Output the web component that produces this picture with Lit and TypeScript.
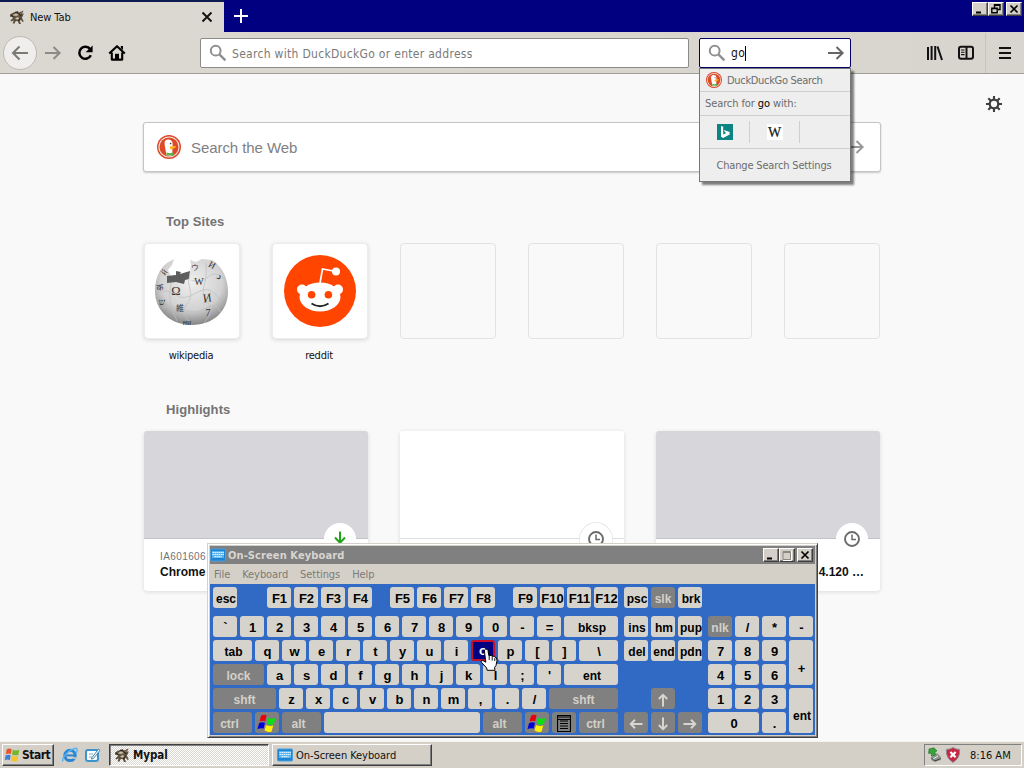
import { LitElement, html, css, svg } from "lit";
import { customElement, property } from "lit/decorators.js";

type Key = [label: string, width?: number, cls?: string];

const duck = (size: number) => html`<svg width=${size} height=${size} viewBox="0 0 24 24">
  <circle cx="12" cy="12" r="12" fill="#d9482b" />
  <circle cx="12" cy="12" r="10.6" fill="#f6e3dc" />
  <circle cx="12" cy="12" r="9.5" fill="#de4a28" />
  <path d="M9.5 20.6L7.6 9.4C7.2 6 9 4.4 11.6 4.6C14.6 4.8 15.9 7 15.6 10L15.2 20.6Q12.4 22 9.5 20.6Z" fill="#fff" />
  <path d="M13.2 11.6C15 10.6 18 10.8 19.4 11.6C18.6 13 16 13.6 14 14.4C12.6 14 12.4 12.4 13.2 11.6Z" fill="#fdb515" />
  <path d="M9.4 17.6L13 18.2L16.6 17.2V21L13 20.4L9.8 21Z" fill="#5cb04a" />
  <circle cx="13.6" cy="8.6" r=".8" fill="#334" />
</svg>`;

const magnifier = html`<svg width="18" height="18" viewBox="0 0 18 18" fill="none" stroke="#8f8f8f" stroke-width="2">
  <circle cx="6.7" cy="6.7" r="4.9" /><path d="M10.4 10.4L16.4 16.4" stroke-width="2.4" />
</svg>`;

const arrow = (color: string, left = false) => html`<svg width="18" height="16" viewBox="0 0 18 16" fill="none" stroke=${color} stroke-width="2">
  <path d=${left ? "M17 8H2M8.5 1.5L2 8L8.5 14.5" : "M1 8H16M9.5 2L15.6 8L9.5 14"} />
</svg>`;

const goat = html`<svg width="16" height="16" viewBox="0 0 16 16">
  <path d="M1 5.5L3.5 4L6 3L9 2.4L10 3.6L14.6 1.6L13 4.4L14.8 4.6L13.6 7.4L12.8 8.6L14.8 12.6L13.6 13L11.6 10.6L11 12.6L12 15H10L8.6 12L6.6 12.2L5.6 14.6H3.6L4.6 11.4L2 12.4L1.4 11.4L4 9L3 7.6L1.2 8Z" fill="#5d5140" />
  <path d="M4 6.2L7 4.6L9.4 6L7 6.8ZM6.4 9.6L8.6 8.2L10.4 9.6L8 10.4ZM11 5L13 3.6" fill="#cfc3aa" stroke="#cfc3aa" stroke-width=".4" />
  <path d="M2 6.6L4.4 7.6M9.6 4.6L12.4 6.8M9.4 12L11.4 9M6 3.4L9 3" stroke="#1e1812" stroke-width="1" />
</svg>`;

const keyboardIcon = html`<svg width="16" height="14" viewBox="0 0 16 14">
  <rect x=".5" y="1" width="15" height="12" rx="1" fill="#1d84d4" stroke="#4f9fd8" />
  <rect x="2" y="3" width="12" height="7" fill="#57b4f0" />
  <path d="M2.5 4.5H14M2.5 6.5H14M4.5 8.7H11.5" stroke="#e8f7ff" stroke-width="1.2" stroke-dasharray="1.4 .6" />
</svg>`;

const flag = html`<svg width="20" height="19" viewBox="0 0 20 19">
  <path d="M4 1.8Q7 0 9.6 1.4L8.2 7.2Q5.4 6 2.6 7.6Z" fill="#e8000b" />
  <path d="M11 4Q14 5.5 18.4 4L16.8 10.2Q13 11.4 9.6 9.4Z" fill="#08e010" />
  <path d="M2 9.2Q5 7.6 8 8.8L6.6 14.6Q3.6 13.6 .4 15.2Z" fill="#0000d8" />
  <path d="M9 11Q12.4 12.6 16.2 11.6L14.6 17.4Q11 18.8 7.6 16.6Z" fill="#fff200" />
</svg>`;

const minGlyph = svg`<path d="M3 8.5H8V10.5H3Z" fill="#000" />`;
const closeGlyph = svg`<path d="M3.5 2.5L10.5 9.5M10.5 2.5L3.5 9.5" stroke="#000" stroke-width="1.7" />`;

@customElement("caption-button")
class CaptionButton extends LitElement {
  @property() kind = "close";
  static styles = css`
    :host { display: block; width: 16px; height: 14px; box-sizing: border-box; background: #d4d0c8;
      border: 1px solid; border-color: #fff #404040 #404040 #fff; box-shadow: inset -1px -1px #808080; }
    svg { display: block; }
  `;
  render() {
    const glyphs: Record<string, unknown> = {
      min: minGlyph,
      close: closeGlyph,
      restore: svg`<path d="M5.5 4.5V1.8H11V6.5H9M5 2.2H11.5M2.8 9.8V5.2H8.2V9.8ZM2.3 5.6H8.7" fill="none" stroke="#000" stroke-width="1.4" />`,
      max: svg`<path d="M3 2.5H10.5V10.5H3ZM3 3.5H10.5" fill="none" stroke="#8b8882" /><path d="M11.5 2V11.5H3" fill="none" stroke="#fff" />`,
    };
    return html`<svg width="14" height="12" viewBox="0 0 14 12">${glyphs[this.kind]}</svg>`;
  }
}

@customElement("screen-keyboard")
class ScreenKeyboard extends LitElement {
  static styles = css`
    :host { display: block; box-sizing: border-box; background: #d4d0c8; border: 1px solid; border-color: #d4d0c8 #404040 #404040 #d4d0c8;
      box-shadow: inset 1px 1px #fff, inset -1px -1px #808080; padding: 2px; }
    .title { display: flex; align-items: center; height: 18px; background: #808080; color: #d8d5cf; padding: 0 2px 0 0;
      font: bold 11px "DejaVu Sans Condensed", "DejaVu Sans", sans-serif; font-stretch: condensed; letter-spacing: .1px; }
    .title span { flex: 1; padding-left: 2px; }
    .title caption-button:last-child { margin-left: 2px; }
    .menu { display: flex; gap: 12px; height: 20px; align-items: center; padding: 0 4px; color: #7d7a75;
      font: 11px "DejaVu Sans Condensed", "DejaVu Sans", sans-serif; font-stretch: condensed; letter-spacing: -.07px; }
    .board { display: flex; background: #316ac5; height: 151px; box-sizing: border-box; padding: 3px 3px 0;
      font: bold 13px "Liberation Sans", Arial, sans-serif; }
    .main { width: 405px; flex: none; }
    .row { display: flex; gap: 3px; height: 21px; margin-bottom: 3px; }
    .row.f { margin-bottom: 8px; }
    .key { box-sizing: border-box; height: 21px; border-radius: 3px; background: #d6d3cc; color: #000; display: flex;
      align-items: center; justify-content: center; padding: 2px 0 0 1px; white-space: nowrap; overflow: hidden; flex: none; }
    .word { font-size: 12px; padding-left: 2px; }
    .g { background: #808080; color: #d4d0c8; padding-left: 0; }
    .mod { padding-right: 6px; }
    .hot { background: #000080; color: #fff; border: 2px solid #c8102e; padding: 0; }
    .nav { margin-left: 6px; display: grid; grid-template-columns: repeat(3, 24px); grid-template-rows: 26px repeat(5, 21px); gap: 3px; }
    .pad { margin-left: 6px; display: grid; grid-template-columns: repeat(4, 24px); grid-template-rows: 26px repeat(5, 21px); gap: 3px; }
    .tall { grid-row: span 2; height: 45px; padding-top: 11px; }
    .wide { grid-column: span 2; }
    .blank { visibility: hidden; }
    .span4 { grid-column: 1 / -1; }
    svg { display: block; flex: none; }
  `;
  key([label, w = 24, cls = ""]: Key) {
    const glyphs: Record<string, unknown> = {
      WIN: flag,
      MENU: html`<svg width="14" height="18" viewBox="0 0 14 18" fill="none" stroke="#000"><path d="M.5 .5H13.5V16.5H.5ZM.5 2H13.5M3 6H11M3 8.5H11M3 11H11M3 13.5H11" stroke-width="1.2" /><path d="M.5 4.5H13.5" /></svg>`,
      UP: this.pointer(0),
      RIGHT: this.pointer(90),
      DOWN: this.pointer(180),
      LEFT: this.pointer(270),
    };
    const word = /^[a-z]{2,}$/.test(label) && !cls.includes("g") ? "word" : "";
    const size = cls.includes("g") ? "font-size:12px;" : "";
    return html`<div class="key ${cls} ${word}" style="${size}width:${w}px">${glyphs[label] ?? label}</div>`;
  }
  pointer(angle: number) {
    return html`<svg width="14" height="14" viewBox="0 0 14 14" fill="none" stroke="#d8d5cf" stroke-width="2"><path d="M7 13.5V2M2.8 6L7 1.8L11.2 6" transform="rotate(${angle} 7 7)" /></svg>`;
  }
  row(keys: Key[], cls = "") {
    return html`<div class="row ${cls}">${keys.map((k) => this.key(k))}</div>`;
  }
  chars(s: string): Key[] {
    return s.split(" ").map((c) => (c === "o" ? [c, 24, "hot"] : [c]) as Key);
  }
  render() {
    const gap = (w: number): Key => ["", w, "blank"];
    return html`
      <div class="title">${keyboardIcon}<span>On-Screen Keyboard</span>
        <caption-button kind="min"></caption-button><caption-button kind="max"></caption-button><caption-button></caption-button></div>
      <div class="menu"><span>File</span><span>Keyboard</span><span>Settings</span><span>Help</span></div>
      <div class="board">
        <div class="main">
          ${this.row([["esc"], gap(24), ...this.chars("F1 F2 F3 F4"), gap(12), ...this.chars("F5 F6 F7 F8"), gap(12), ...this.chars("F9 F10 F11 F12")], "f")}
          ${this.row([...this.chars("\` 1 2 3 4 5 6 7 8 9 0 - ="), ["bksp", 54]])}
          ${this.row([["tab", 39], ...this.chars("q w e r t y u i o p [ ]"), ["\\", 39]])}
          ${this.row([["lock", 51, "g"], ...this.chars("a s d f g h j k l ; '"), ["ent", 54]])}
          ${this.row([["shft", 63, "g"], ...this.chars("z x c v b n m , . /"), ["shft", 69, "g"]])}
          ${this.row([["ctrl", 39, "g mod"], ["WIN", 24, "g"], ["alt", 39, "g mod"], ["", 156], ["alt", 39, "g mod"], ["WIN", 24, "g"], ["MENU", 24, "g"], ["ctrl", 39, "g mod"]])}
        </div>
        <div class="nav">
          ${([["psc"], ["slk", 24, "g"], ["brk"], ["ins"], ["hm"], ["pup"], ["del"], ["end"], ["pdn"], gap(24), gap(24), gap(24),
            gap(24), ["UP", 24, "g"], gap(24), ["LEFT", 24, "g"], ["DOWN", 24, "g"], ["RIGHT", 24, "g"]] as Key[]).map((k) => this.key(k))}
        </div>
        <div class="pad">
          <div class="span4"></div>
          ${([["nlk", 24, "g"], ["/"], ["*"], ["-"], ["7"], ["8"], ["9"], ["+", 24, "tall"], ["4"], ["5"], ["6"], ["1"], ["2"], ["3"],
            ["ent", 24, "tall"], ["0", 51, "wide"], ["."]] as Key[]).map((k) => this.key(k))}
        </div>
      </div>`;
  }
}

const globe = html`<svg width="76" height="76" viewBox="0 -2 76 76">
  <defs><radialGradient id="ball" cx=".5" cy=".35" r=".65"><stop offset="0" stop-color="#efefef" /><stop offset=".65" stop-color="#d2d2d2" /><stop offset="1" stop-color="#858585" /></radialGradient></defs>
  <path d="M13 8L20 4L18 10L14 15L17 21L28 19L36 17L37 10L36 5L42 7L48 4L58 5C69 12 74 24 74 37C74 56 59 70 38 70C17 70 1 56 1 36C1 24 5 14 13 8Z" fill="url(#ball)" />
  <path d="M13 21L22 20L22 16L27 17L26 19L36 16L35 24L31 25L30 29L22 27L13 28Z" fill="#5d5d5d" />
  <g fill="none" stroke="#bdbdbd" stroke-width=".7">
    <path d="M36 18Q33 27 36 35T32 50T38 70M3 37Q15 34 22 40T42 38T62 40T73 37M8 53Q21 50 31 55T52 53T66 57M52 8Q53 22 50 31T54 48T50 68M17 28Q14 40 17 50T23 66M37 25Q47 29 54 22T71 24" />
  </g>
  <g fill="#333" font-family="Liberation Serif, serif" text-anchor="middle">
    <text x="22" y="40" font-size="12.5">Ω</text>
    <text x="45" y="30" font-size="10">W</text>
    <text x="53" y="47" font-size="12" transform="rotate(-8 53 42)">И</text>
    <text x="26" y="56" font-size="8" font-family="Noto Sans CJK JP">維</text>
    <text x="54" y="61" font-size="10">7</text>
    <text x="66" y="24" font-size="10" transform="rotate(25 66 20)">د</text>
    <text x="41" y="15" font-size="8">ウ</text>
    <text x="58" y="13" font-size="9" transform="rotate(30 58 10)">И</text>
    <text x="6" y="35" font-size="9" transform="rotate(-10 6 32)">क</text>
    <text x="8" y="50" font-size="9">ש</text>
    <text x="33" y="70" font-size="8">ни</text>
    <text x="10" y="20" font-size="9" transform="rotate(-50 10 17)">й</text>
  </g>
</svg>`;

const snoo = html`<svg width="72" height="72" viewBox="0 0 72 72">
  <circle cx="36" cy="36" r="36" fill="#ff4500" />
  <path d="M36 28L38.5 14L52 16.5" fill="none" stroke="#fff" stroke-width="1.7" />
  <circle cx="52" cy="16.5" r="4" fill="#fff" />
  <circle cx="18" cy="34.5" r="5" fill="#fff" /><circle cx="54" cy="34.5" r="5" fill="#fff" />
  <ellipse cx="36" cy="42" rx="20.5" ry="14.5" fill="#fff" />
  <circle cx="27.6" cy="39.8" r="3.8" fill="#ff4500" /><circle cx="44.4" cy="39.8" r="3.8" fill="#ff4500" />
  <path d="M27.5 48.5Q36 54 44.5 48.5" fill="none" stroke="#222" stroke-width="1.8" />
</svg>`;

const clock = html`<svg width="16" height="16" viewBox="0 0 16 16" fill="none" stroke="#6b6b6d"><circle cx="8" cy="8" r="7" stroke-width="1.9" /><path d="M8 3.6V8.5H12" stroke-width="1.5" /></svg>`;
const download = html`<svg width="16" height="16" viewBox="0 0 16 16" fill="none" stroke="#22a31c" stroke-width="2"><path d="M8 .5V11.5M3 6.5L8 11.7L13 6.5" /></svg>`;

@customElement("app-root")
class AppRoot extends LitElement {
  static styles = css`
    :host { display: flex; flex-direction: column; position: relative; width: 1024px; height: 768px; overflow: hidden; background: #f9f9fa;
      font: 11px "DejaVu Sans Condensed", "DejaVu Sans", sans-serif; font-stretch: condensed; color: #111; }
    svg { display: block; flex: none; }
    .tabs { display: flex; height: 32px; background: #000080; }
    .tab { display: flex; align-items: center; width: 224px; box-sizing: border-box; border-top: 2px solid #0b1a52; background: #dbd8d1; padding: 0 11px 0 9px; letter-spacing: -.1px; }
    .tab span { flex: 1; padding-left: 5px; }
    .plus { margin: 8px 0 0 9px; }
    .caps { display: flex; margin: 2px 2px 0 auto; }
    .caps caption-button:last-child { margin-left: 2px; }
    .bar { display: flex; align-items: center; height: 42px; box-sizing: border-box; background: linear-gradient(90deg, #dbd8d1, #d8d5ce); border-bottom: 1px solid #a19e98; padding: 0 12px 0 3px; }
    .back { width: 32px; height: 32px; border: 1px solid #bdbab4; border-radius: 50%; background: #efeeec; display: grid; place-items: center; }
    .nudge { margin-left: 7px; }
    .reload { margin-left: 15px; }
    .home { margin-left: 13px; }
    .field { display: flex; align-items: center; box-sizing: border-box; height: 30px; background: #fff; border: 1px solid #8d8b86; border-radius: 2px; padding: 0 5px 0 8px; }
    .url { width: 489px; margin-left: 74px; color: #7a7a7a; font-size: 12px; gap: 5px; letter-spacing: .3px; white-space: nowrap; }
    .url span, .typed { position: relative; top: 1px; }
    .find { width: 152px; margin-left: 10px; border-color: #000066; font-size: 12px; gap: 5px; position: relative; }
    .find .typed { border-right: 1px solid #000; line-height: 15px; letter-spacing: .3px; }
    .find .push { margin-left: auto; }
    .tools { display: flex; align-items: center; margin-left: auto; gap: 15px; }
    .rule { width: 1px; height: 40px; background: #c6c3bc; margin: 0 12px 0 11px; }
    .popup { position: absolute; left: -1px; top: 29px; width: 152px; height: 114px; box-sizing: border-box; background: #eee; border: 1px solid #777;
      box-shadow: 3px 3px 2px rgba(0, 0, 0, .5); font-size: 11px; color: #6c6c6c; z-index: 2; letter-spacing: -.17px; }
    .popup div { display: flex; align-items: center; border-bottom: 1px solid #cfcfcf; box-sizing: border-box; }
    .popup .p1 { height: 23px; padding: 1px 0 0 6px; gap: 5px; letter-spacing: -.32px; }
    .popup .p2 { height: 24px; padding: 1px 0 0 5px; white-space: pre; letter-spacing: -.1px; }
    .p2 b { font-weight: normal; color: #000; }
    .popup .p3 { height: 33px; }
    .popup .p3 span { width: 50px; height: 22px; display: grid; place-items: center; border-right: 1px solid #cfcfcf; box-sizing: border-box; }
    .popup .p4 { height: 32px; justify-content: center; border: 0; padding: 1px 2px 0 0; }
    .wiki { background: #fff; width: 16px; height: 16px; font: 14px/17px "Liberation Serif", serif; color: #111; text-align: center; letter-spacing: 0; -webkit-text-stroke: .2px #111; }
    .page { flex: 1; padding: 48px 143px 0; position: relative; }
    .gear { position: absolute; right: 22px; top: 22px; }
    .web { display: flex; align-items: center; width: 738px; height: 50px; box-sizing: border-box; background: #fff; border: 1px solid #c4c4c6; border-radius: 3px;
      box-shadow: 0 1px 2px rgba(0, 0, 0, .2); padding: 0 15px 0 13px; font: 15px "Liberation Sans", Arial, sans-serif; color: #808083; gap: 10px; letter-spacing: -.07px; }
    .web svg:last-child { margin-left: auto; }
    h2 { margin: 0; font: bold 13px/16px "Liberation Sans", Arial, sans-serif; color: #737373; padding-left: 23px; letter-spacing: .08px; }
    .web + h2 { margin-top: 42px; }
    .sites { display: grid; grid-template-columns: repeat(6, 96px); gap: 32px; padding: 13px 0 0 1px; }
    .tile { width: 96px; height: 96px; box-sizing: border-box; border: 1px solid #e2e2e3; border-radius: 4px; display: grid; place-items: center; }
    .full { background: #fff; border-color: #ececee; box-shadow: 0 1px 4px rgba(12, 12, 13, .15); }
    .name { text-align: center; height: 16px; line-height: 16px; margin-top: 9px; padding-right: 2px; letter-spacing: -.25px; }
    .sites + h2 { margin-top: 38px; }
    .cards { display: grid; grid-template-columns: repeat(3, 224px); gap: 32px; padding: 13px 0 0 1px; }
    .card { height: 160px; background: #fff; border-radius: 3px; box-shadow: 0 1px 4px rgba(12, 12, 13, .13); }
    .shot { height: 108px; box-sizing: border-box; border-bottom: 1px solid #c4c4c6; border-radius: 3px 3px 0 0; background: #d7d7db; position: relative; }
    .shot.w { background: #fff; border-color: #ddd; }
    .badge { position: absolute; right: 12px; bottom: -17px; width: 32px; height: 32px; border-radius: 50%; background: #fff; display: grid; place-items: center; box-shadow: 0 0 0 1px #e9e9eb; }
    .badge.whole { box-shadow: none; }
    .meta { padding: 11px 16px; font: 10px/13px "Liberation Sans", Arial, sans-serif; color: #737373; letter-spacing: .4px; }
    .meta strong { display: block; font: bold 12px/19px "Liberation Sans", Arial, sans-serif; color: #111; letter-spacing: 0; }
    .meta.end { text-align: right; }
    .osk { position: absolute; left: 207px; top: 543px; width: 611px; height: 195px; z-index: 3; }
    .hand { position: absolute; left: 480px; top: 648px; z-index: 4; }
    .task { display: flex; align-items: flex-start; height: 27px; box-sizing: border-box; background: #d4d0c8; border-top: 1px solid #f4f3f1; padding: 2px 2px 0; position: relative; z-index: 2; }
    .btn { display: flex; align-items: center; height: 22px; box-sizing: border-box; border: 1px solid; border-color: #fff #404040 #404040 #fff; box-shadow: inset -1px -1px #808080; white-space: nowrap; }
    .start { width: 52px; font-weight: bold; font-size: 12px; gap: 1px; padding-left: 1px; letter-spacing: -.5px; }
    .quick { display: flex; gap: 6px; margin: 3px 8px 0 8px; }
    .app { width: 160px; gap: 3px; padding-left: 4px; letter-spacing: -.06px; }
    .down { border-color: #404040 #fff #fff #404040; box-shadow: inset 1px 1px #808080; font-weight: bold; font-size: 11.5px;
      background: repeating-conic-gradient(#fff 0 25%, #d8d5ce 0 50%) 0 0 / 2px 2px; margin-right: 3px; }
    .tray { margin-left: auto; width: 98px; height: 22px; box-sizing: border-box; border: 1px solid; border-color: #808080 #fff #fff #808080; display: flex; align-items: center; gap: 2px; padding-left: 1px; white-space: nowrap; letter-spacing: 0; }
    .tray span { padding-left: 7px; }
  `;
  render() {
    return html`
      <div class="tabs">
        <div class="tab">${goat}<span>New Tab</span>
          <svg width="12" height="12" viewBox="0 0 12 12" stroke="#111" stroke-width="1.9"><path d="M1.5 1.5L10.5 10.5M10.5 1.5L1.5 10.5" /></svg></div>
        <svg class="plus" width="16" height="16" viewBox="0 0 16 16" stroke="#fff" stroke-width="2"><path d="M8 1V15M1 8H15" /></svg>
        <div class="caps"><caption-button kind="min"></caption-button><caption-button kind="restore"></caption-button><caption-button></caption-button></div>
      </div>
      <div class="bar">
        <div class="back">${arrow("#7b7975", true)}</div>
        <div class="nudge">${arrow("#8c8a85")}</div>
        <svg class="reload" width="18" height="18" viewBox="8 0 18 18" fill="none" stroke="#000" stroke-width="2.5"><path d="M21.2 5.2A6 6 0 1 0 21.8 11.2" /><path d="M23.6 1.4V8.2H16.6Z" fill="#000" stroke="none" /></svg>
        <svg class="home" width="18" height="18" viewBox="0 0 18 18"><path d="M1.2 9.6L9 2.2L16.8 9.6M3.8 8.6V15.6H14.2V8.6" fill="none" stroke="#000" stroke-width="2.1" stroke-linejoin="round" /><path d="M7 16V9.8H11V16Z" /><path d="M12.8 2H15V6L12.8 4Z" /></svg>
        <div class="field url">${magnifier}<span>Search with DuckDuckGo or enter address</span></div>
        <div class="field find">${magnifier}<span class="typed">go</span><span class="push">${arrow("#666")}</span>
          <div class="popup">
            <div class="p1">${duck(16)}<span>DuckDuckGo Search</span></div>
            <div class="p2">Search for <b>go</b> with:</div>
            <div class="p3"><span><svg width="16" height="16" viewBox="0 0 16 16"><rect width="16" height="16" fill="#0c8484" /><path d="M4 2L6.2 2.8V10.6L9.3 8.9L7.8 8.1L7 6L12.6 8V10.5L6.2 14L4 12.8Z" fill="#fff" /></svg></span><span><b class="wiki">W</b></span></div>
            <div class="p4">Change Search Settings</div>
          </div>
        </div>
        <div class="tools">
          <svg width="17" height="16" viewBox="0 0 17 16" stroke="#111" stroke-width="2"><path d="M2 2V15M5.6 1V15M9.2 1V15M11.5 1.5L16 15" /></svg>
          <svg width="16" height="16" viewBox="0 0 16 16" fill="none" stroke="#111" stroke-width="2"><rect x="1" y="1.8" width="14" height="12" rx="2" /><path d="M8.5 2V14" /><path d="M3 5H6.5M3 7.3H6.5M3 9.6H6.5" stroke-width="1.1" /></svg>
        </div>
        <div class="rule"></div>
        <svg width="14" height="14" viewBox="0 0 14 14" stroke="#111" stroke-width="2.2"><path d="M1 2H13M1 7H13M1 12H13" /></svg>
      </div>
      <div class="page">
        <svg class="gear" width="16" height="16" viewBox="0 0 16 16" fill="none" stroke="#3e3e40"><circle cx="8" cy="8" r="4.3" stroke-width="2.3" /><path d="M8 0V3.5M8 12.5V16M0 8H3.5M12.5 8H16M2.3 2.3L4.8 4.8M11.2 11.2L13.7 13.7M2.3 13.7L4.8 11.2M11.2 4.8L13.7 2.3" stroke-width="2.1" /></svg>
        <div class="web">${duck(24)}<span>Search the Web</span>${arrow("#98989a")}</div>
        <h2>Top Sites</h2>
        <div class="sites">
          <div><div class="tile full">${globe}</div><div class="name">wikipedia</div></div>
          <div><div class="tile full">${snoo}</div><div class="name">reddit</div></div>
          ${[0, 1, 2, 3].map(() => html`<div class="tile"></div>`)}
        </div>
        <h2>Highlights</h2>
        <div class="cards">
          <div class="card"><div class="shot"><div class="badge whole">${download}</div></div><div class="meta">IA601606<strong>Chrome</strong></div></div>
          <div class="card"><div class="shot w"><div class="badge">${clock}</div></div></div>
          <div class="card"><div class="shot"><div class="badge whole">${clock}</div></div><div class="meta end">&nbsp;<strong>4.120 …</strong></div></div>
        </div>
      </div>
      <div class="task">
        <div class="btn start"><svg width="17" height="16" viewBox="0 0 20 19"><path d="M3 3Q6 1 9 2.6L8 8.4Q5 7 2 8.6Z" fill="#e8552b" /><path d="M10.4 3.4Q14 5 18 3.4L17 9.4Q13 10.6 9.4 8.8Z" fill="#74b72c" /><path d="M1.8 10Q5 8.4 7.8 9.8L6.8 15.6Q3.8 14 .8 15.8Z" fill="#3b7fd8" /><path d="M9.2 10.4Q12.6 12 16.8 10.8L15.8 16.6Q12 17.8 8.2 16Z" fill="#f6c32c" /></svg><span>Start</span></div>
        <div class="quick">
          <svg width="16" height="16" viewBox="0 0 16 16" fill="none"><circle cx="8" cy="8.4" r="5.2" stroke="#2a86d6" stroke-width="3" /><path d="M4 8.4H13" stroke="#2a86d6" stroke-width="2" /><path d="M1 14.5C-1 11 8 1.5 14 1.2C16 2 15 4.5 14 6" stroke="#5bb4ee" stroke-width="1.5" /><path d="M10.5 11H14" stroke="#d4d0c8" stroke-width="1.6" /></svg>
          <svg width="17" height="16" viewBox="0 0 17 16"><rect x="1" y="2" width="14" height="13" rx="3" fill="#3c94cf" /><rect x="3" y="4" width="10" height="9" rx="1" fill="#fff" /><path d="M5 7H9M5 10H8" stroke="#7ab" /><path d="M8 10.5L14.5 2L16 3.4L9.6 11.4L7.4 12.2Z" fill="#e9f4fb" stroke="#2c6f9f" stroke-width=".8" /></svg>
        </div>
        <div class="btn app down">${goat}<span>Mypal</span></div>
        <div class="btn app">${keyboardIcon}<span>On-Screen Keyboard</span></div>
        <div class="tray">
          <svg width="17" height="16" viewBox="0 0 17 16"><path d="M5 10L11 6L15 10V13L9 15L5 13Z" fill="#8f9690" /><path d="M5.5 11L9 14L14.5 11.6" stroke="#3c403c" fill="none" /><path d="M7 12L12 9" stroke="#e8e8e8" /><path d="M3 2L8 .8L11 4L9 4.6L9.4 8L5.6 9L5 6L2.6 6.4Z" fill="#37a33a" stroke="#1c7021" stroke-width=".6" /></svg>
          <svg width="16" height="16" viewBox="0 0 16 16"><path d="M8 .6Q11 2.6 14.6 2.4Q15.4 11 8 15.4Q.6 11 1.4 2.4Q5 2.6 8 .6Z" fill="#c72643" stroke="#8b8c92" /><path d="M5.4 5L10.6 10.2M10.6 5L5.4 10.2" stroke="#fff" stroke-width="2.2" /></svg>
          <span>8:16 AM</span>
        </div>
      </div>
      <screen-keyboard class="osk"></screen-keyboard>
      <svg class="hand" width="20" height="24" viewBox="0 0 20 24"><path d="M5.5 1.2Q7.5 .6 8 2.4L8.8 7.6L11 7.4L12.4 8.4L14 8.2L15.2 9.4L16.4 9.6L17 12.5L16 17.5L14.6 19.4L15 22.3H7.2L6.6 20L1.6 14.4Q.4 12.6 2 12L5.8 14.2L4.4 3Q4.4 1.6 5.5 1.2Z" fill="#fff" stroke="#000" /><path d="M9.2 8V12M12.2 9V12.6M14.8 10V13" stroke="#000" stroke-width=".9" /></svg>`;
  }
}
